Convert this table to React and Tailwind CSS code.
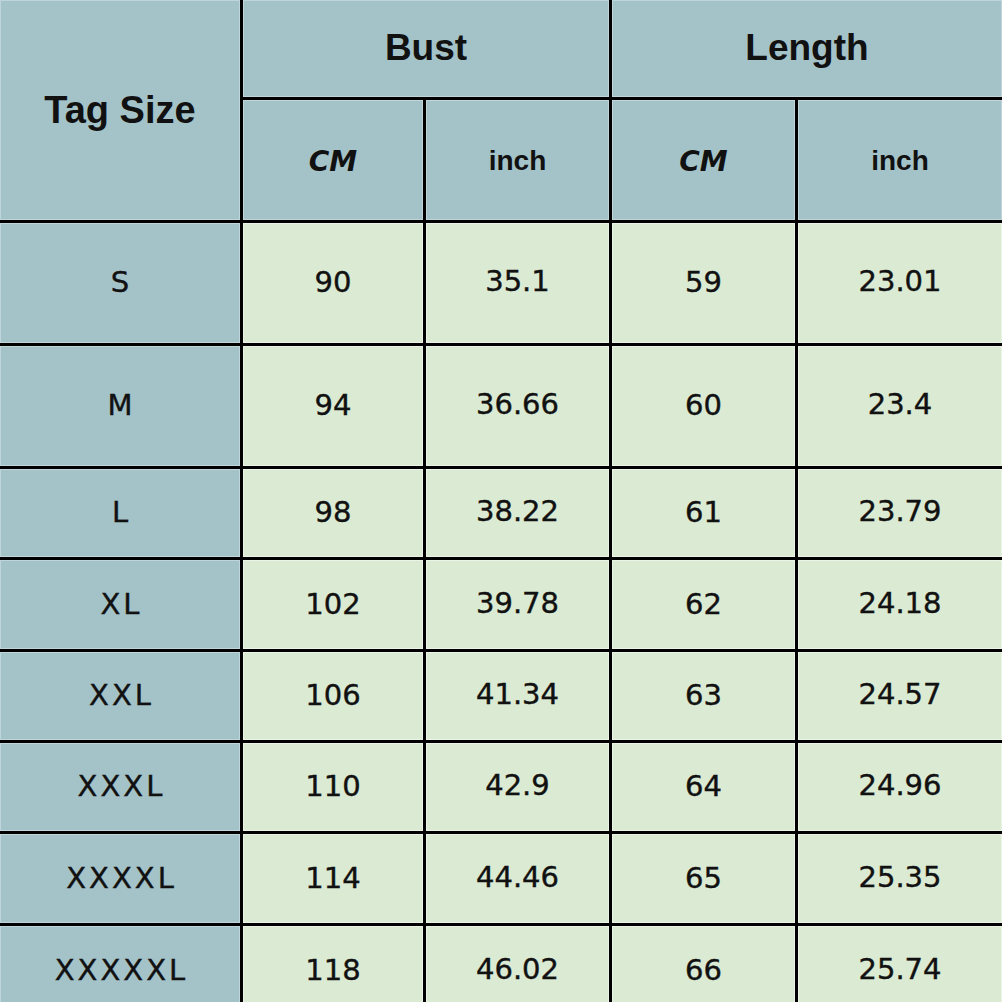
import React from 'react';

const rows = [
  ['S', '90', '35.1', '59', '23.01'],
  ['M', '94', '36.66', '60', '23.4'],
  ['L', '98', '38.22', '61', '23.79'],
  ['XL', '102', '39.78', '62', '24.18'],
  ['XXL', '106', '41.34', '63', '24.57'],
  ['XXXL', '110', '42.9', '64', '24.96'],
  ['XXXXL', '114', '44.46', '65', '25.35'],
  ['XXXXXL', '118', '46.02', '66', '25.74'],
];

const head = 'flex items-center justify-center bg-[#a4c3c9] shadow-[inset_0_0_0_1px_rgba(255,255,255,0.3)] text-[#111]';
const body = 'flex items-center justify-center bg-[#dbead3] shadow-[inset_0_0_0_1px_rgba(255,255,255,0.45)] text-[#111] font-["DejaVu_Sans",sans-serif] text-[29px] [-webkit-text-stroke:0.4px_#111]';

export default function App() {
  return (
    <div className="w-[1002px] h-[1002px] overflow-hidden bg-black">
      <div className="grid gap-[3px] grid-cols-[240px_180px_183px_183px_1fr] grid-rows-[97px_120px_120px_120px_88px_89px_88px_88px_89px_89px]">
        {/* Header */}
        <div className={`${head} row-span-2 font-["Liberation_Sans",sans-serif] font-bold text-[38px]`}>Tag Size</div>
        <div className={`${head} col-span-2 font-["Liberation_Sans",sans-serif] font-bold text-[37px] pb-[2px]`}>Bust</div>
        <div className={`${head} col-span-2 font-["Liberation_Sans",sans-serif] font-bold text-[37px] pb-[2px]`}>Length</div>
        <div className={`${head} font-["DejaVu_Sans",sans-serif] font-bold italic text-[28px] pt-[4px]`}>CM</div>
        <div className={`${head} font-["Liberation_Sans",sans-serif] font-bold text-[28px] pt-[2px]`}>inch</div>
        <div className={`${head} font-["DejaVu_Sans",sans-serif] font-bold italic text-[28px] pt-[4px]`}>CM</div>
        <div className={`${head} font-["Liberation_Sans",sans-serif] font-bold text-[28px] pt-[2px]`}>inch</div>

        {/* Body */}
        {rows.map(([size, bcm, bin, lcm, lin]) => (
          <React.Fragment key={size}>
            <div className={`${head} font-["DejaVu_Sans",sans-serif] text-[29px] tracking-[3px] pl-[3px] [-webkit-text-stroke:0.4px_#111]`}>{size}</div>
            <div className={body}>{bcm}</div>
            <div className={`${body} pb-[2px]`}>{bin}</div>
            <div className={body}>{lcm}</div>
            <div className={`${body} pb-[2px]`}>{lin}</div>
          </React.Fragment>
        ))}
      </div>
    </div>
  );
}
